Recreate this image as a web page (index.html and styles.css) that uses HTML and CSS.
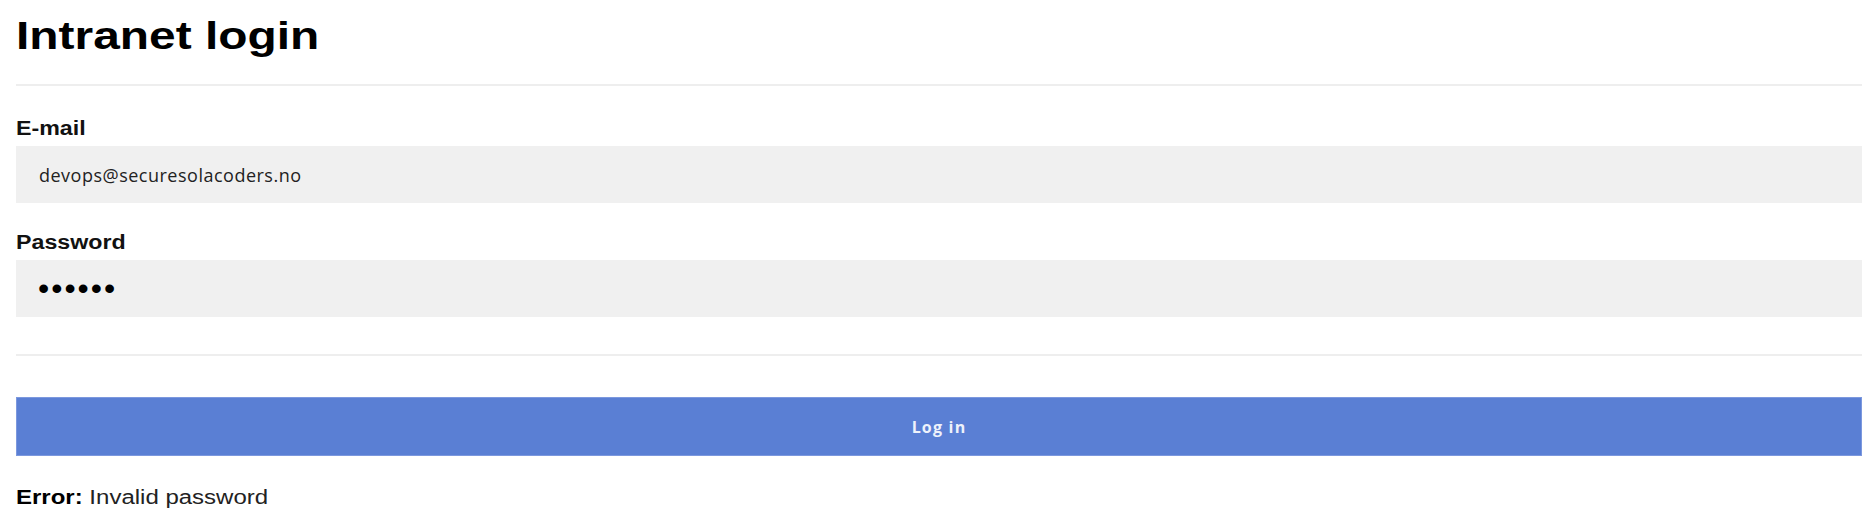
FILE: index.html
```html
<!DOCTYPE html>
<html lang="en">
<head>
<meta charset="utf-8">
<title>Intranet login</title>
<link rel="stylesheet" href="styles.css">
</head>
<body>
<main class="page">
  <h1 class="title">Intranet login</h1>
  <hr class="rule">
  <form class="login-form">
    <div class="field">
      <label class="field-label" for="email">E-mail</label>
      <input class="field-input" id="email" type="email" value="devops@securesolacoders.no">
    </div>
    <div class="field field--next">
      <label class="field-label" for="password">Password</label>
      <input class="field-input field-input--password" id="password" type="password" value="secret">
    </div>
    <hr class="rule rule--form">
    <button class="submit" type="button">Log in</button>
  </form>
  <p class="message"><strong class="message-label">Error:</strong> Invalid password</p>
</main>
</body>
</html>
```

FILE: styles.css
```css
html, body {
  margin: 0;
  padding: 0;
  background: #ffffff;
}

body {
  font-family: "Liberation Sans", Arial, sans-serif;
  color: #111111;
}

.page {
  padding: 0 8px 0 16px;
}

.title {
  width: fit-content;
  margin: 14px 0 0;
  font-size: 39px;
  line-height: 44px;
  font-weight: bold;
  color: #000000;
  transform: scaleX(1.228);
  transform-origin: left center;
}

.rule {
  border: 0;
  height: 2px;
  margin: 26px 0 0;
  background: #eeeeee;
}

.login-form {
  display: flex;
  flex-direction: column;
  padding-top: 4px;
}

.field {
  display: flex;
  flex-direction: column;
  align-items: flex-start;
  margin-top: 26px;
}

.field--next {
  margin-top: 27px;
}

.field-label {
  font-size: 20px;
  line-height: 24px;
  font-weight: bold;
  color: #111111;
  margin-bottom: 6px;
  transform: scaleX(1.16);
  transform-origin: left center;
}

.field-input {
  box-sizing: border-box;
  height: 57px;
  width: 100%;
  margin: 0;
  padding: 0 23px;
  border: 0;
  background: #f0f0f0;
  font-family: "Open Sans", sans-serif;
  font-size: 18px;
  letter-spacing: 0.5px;
  color: #222222;
  outline: none;
}

.field-input--password {
  padding-left: 22px;
  font-family: "Liberation Sans", sans-serif;
  font-size: 32px;
  letter-spacing: 2px;
  color: #000000;
}

.rule--form {
  margin-top: 37px;
}

.submit {
  box-sizing: border-box;
  height: 59px;
  width: 100%;
  margin: 41px 0 0;
  border: 1px solid #7c98de;
  background: #5a7fd4;
  color: #eef2fb;
  font-family: "Open Sans", sans-serif;
  font-size: 16px;
  font-weight: bold;
  letter-spacing: 1.2px;
  cursor: pointer;
}

.message {
  width: fit-content;
  margin: 29px 0 0;
  font-size: 20px;
  line-height: 24px;
  color: #222222;
  transform: scaleX(1.2);
  transform-origin: left center;
}

.message-label {
  color: #000000;
}
```
